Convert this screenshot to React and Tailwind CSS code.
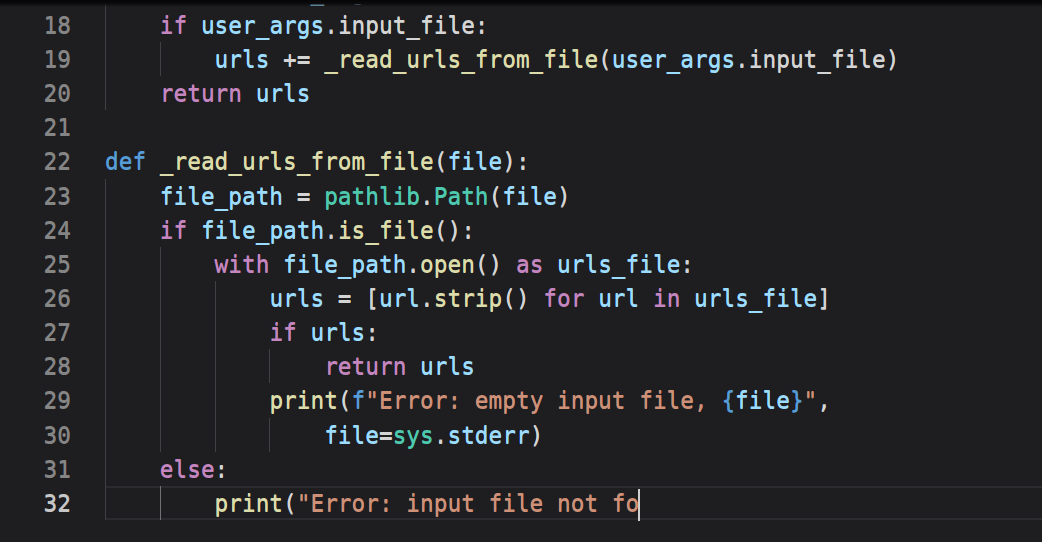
import React from "react";

const KW = "#C586C0";
const DEF = "#569CD6";
const V = "#9CDCFE";
const FN = "#DCDCAA";
const CLS = "#4EC9B0";
const STR = "#CE9178";
const P = "#D4D4D4";

const lines = [
  { n: 17, g: 1, t: [["    urls = ", P], ["user_args", V], [".urls", P]] },
  { n: 18, g: 1, t: [["    ", P], ["if", KW], [" ", P], ["user_args", V], [".input_file:", P]] },
  {
    n: 19,
    g: 2,
    t: [
      ["        ", P],
      ["urls", V],
      [" += ", P],
      ["_read_urls_from_file", FN],
      ["(", P],
      ["user_args", V],
      [".input_file)", P],
    ],
  },
  { n: 20, g: 1, t: [["    ", P], ["return", KW], [" ", P], ["urls", V]] },
  { n: 21, g: 0, t: [] },
  {
    n: 22,
    g: 0,
    t: [["def", DEF], [" ", P], ["_read_urls_from_file", FN], ["(", P], ["file", V], ["):", P]],
  },
  {
    n: 23,
    g: 1,
    t: [["    ", P], ["file_path", V], [" = ", P], ["pathlib", CLS], [".", P], ["Path", CLS], ["(", P], ["file", V], [")", P]],
  },
  {
    n: 24,
    g: 1,
    t: [["    ", P], ["if", KW], [" ", P], ["file_path", V], [".", P], ["is_file", FN], ["():", P]],
  },
  {
    n: 25,
    g: 2,
    t: [
      ["        ", P],
      ["with", KW],
      [" ", P],
      ["file_path", V],
      [".", P],
      ["open", FN],
      ["() ", P],
      ["as", KW],
      [" ", P],
      ["urls_file", V],
      [":", P],
    ],
  },
  {
    n: 26,
    g: 3,
    t: [
      ["            ", P],
      ["urls", V],
      [" = [", P],
      ["url", V],
      [".", P],
      ["strip", FN],
      ["() ", P],
      ["for", KW],
      [" ", P],
      ["url", V],
      [" ", P],
      ["in", KW],
      [" ", P],
      ["urls_file", V],
      ["]", P],
    ],
  },
  { n: 27, g: 3, t: [["            ", P], ["if", KW], [" ", P], ["urls", V], [":", P]] },
  { n: 28, g: 4, t: [["                ", P], ["return", KW], [" ", P], ["urls", V]] },
  {
    n: 29,
    g: 3,
    t: [
      ["            ", P],
      ["print", FN],
      ["(", P],
      ["f", DEF],
      ['"Error: empty input file, ', STR],
      ["{", DEF],
      ["file", V],
      ["}", DEF],
      ['"', STR],
      [",", P],
    ],
  },
  {
    n: 30,
    g: 4,
    t: [["                ", P], ["file", V], ["=", P], ["sys", CLS], [".", P], ["stderr", V], [")", P]],
  },
  { n: 31, g: 1, t: [["    ", P], ["else", KW], [":", P]] },
  {
    n: 32,
    g: 2,
    active: true,
    t: [["        ", P], ["print", FN], ["(", P], ['"Error: input file not fo', STR]],
  },
];

const CH = 13.697;

function Line({ line }) {
  const guides = [];
  for (let i = 0; i < line.g; i++) guides.push(i);
  return (
    <div className="flex h-[34.15px] shrink-0">
      <div
        className={
          "w-[105px] shrink-0 pr-[34px] text-right leading-[34.15px] " +
          (line.active ? "text-[#C6C6C6]" : "text-[#858585]")
        }
      >
        {line.n}
      </div>
      <div
        className={
          "relative flex-1 leading-[30.15px] whitespace-pre " +
          (line.active ? "border-y-2 border-[#2c2b2f]" : "border-y-2 border-transparent")
        }
      >
        {guides.map((i) => (
          <span
            key={i}
            className={
              "absolute top-[-2px] bottom-[-2px] w-px " +
              (line.active && i === line.g - 1 ? "bg-[#727274]" : "bg-[#403f43]")
            }
            style={{ left: i * 4 * CH }}
          />
        ))}
        <span className="relative">
          {line.t.map(([txt, c], k) => (
            <span key={k} style={{ color: c }}>
              {txt}
            </span>
          ))}
          {line.active && (
            <span className="absolute right-[-1px] top-[-1px] h-[32px] w-[2px] bg-[#d0d0d0]" />
          )}
        </span>
      </div>
    </div>
  );
}

export default function App() {
  return (
    <div
      className="relative h-[542px] w-[1042px] overflow-hidden bg-[#1e1d20] text-[22.75px] [text-shadow:0_0.6px_0_currentColor]"
      style={{ fontFamily: '"DejaVu Sans Mono", monospace' }}
    >
      <div className="mt-[-26.25px] flex flex-col">
        {lines.map((l) => (
          <Line key={l.n} line={l} />
        ))}
      </div>
      <div className="pointer-events-none absolute left-0 right-0 top-0 h-[7px] bg-gradient-to-b from-[#050506] via-[#0c0c0e] to-transparent" />
    </div>
  );
}
